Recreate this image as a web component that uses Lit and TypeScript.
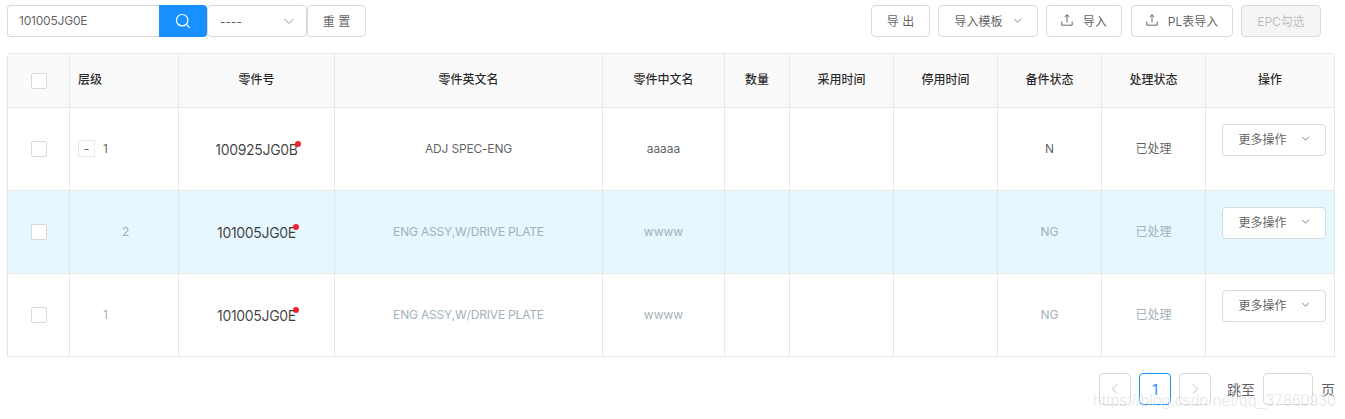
import { LitElement, html, css } from "lit";
import { customElement } from "lit/decorators.js";

const chevron = (cls: string) => html`<svg class=${cls} viewBox="0 0 12 12" fill="none" stroke="currentColor" stroke-width="1.200"><path d="M1.500 3.800 6 8.300l4.500-4.500"/></svg>`;
const upload = html`<svg class="up" viewBox="0 0 12 12" fill="none" stroke="currentColor" stroke-width="1"><path d="M6 .8V8.500M3.700 3 6 .7 8.300 3M.8 7.500v3.700h10.400V7.500"/></svg>`;

const cols = [62, 109, 156, 268, 122, 65, 104, 104, 104, 104, 129];
const rows = [
  { lvl: "1", tree: true, no: "100925JG0B", en: "ADJ SPEC-ENG", cn: "aaaaa", st: "N", dim: false, hl: false },
  { lvl: "2", tree: false, no: "101005JG0E", en: "ENG ASSY,W/DRIVE PLATE", cn: "wwww", st: "NG", dim: true, hl: true },
  { lvl: "1", tree: false, no: "101005JG0E", en: "ENG ASSY,W/DRIVE PLATE", cn: "wwww", st: "NG", dim: true, hl: false },
];

@customElement("app-root")
export class AppRoot extends LitElement {
  static styles = css`
    :host { display: block; width: 1345px; height: 419px; position: relative; overflow: hidden; background: #fff;
      font-family: "Inter", "Noto Sans CJK SC", sans-serif; font-size: 12px; color: rgba(0,0,0,.65); }
    * { box-sizing: border-box; }
    .bar { display: flex; justify-content: space-between; padding: 5px 24px 0 7px; height: 53px; }
    .left, .right { display: flex; height: 32px; }
    .right { gap: 8px; }
    .input { width: 152px; border: 1px solid #d9d9d9; border-right: 0; border-radius: 4px 0 0 4px; padding: 0 11px; line-height: 30px; font-size: 12px; letter-spacing: -.2px; }
    .search { width: 48px; background: #1890ff; border-radius: 0 4px 4px 0; color: #fff; display: flex; align-items: center; justify-content: center; }
    .search svg { width: 16px; height: 16px; }
    .select { width: 100px; border: 1px solid #d9d9d9; border-radius: 4px; display: flex; align-items: center; justify-content: space-between; padding: 0 11px 0 12px; }
    .chev { width: 12px; height: 12px; color: #bfbfbf; }
    .btn { height: 32px; border: 1px solid #d9d9d9; border-radius: 4px; background: #fff; display: flex; align-items: center; justify-content: center; font-size: 12px; white-space: nowrap; padding-bottom: 2px; }
    .b59 { width: 59px; } .b100 { width: 100px; gap: 10px; } .b76 { width: 76px; gap: 10px; margin-right: 1px; } .b102 { width: 102px; gap: 10px; }
    .b80 { width: 80px; background: #f5f5f5; color: rgba(0,0,0,.25); }
    .sm { width: 9px; height: 9px; color: rgba(0,0,0,.55); }
    .up { width: 12px; height: 12px; color: rgba(0,0,0,.6); }
    .wrap { margin-left: 7px; width: 1328px; border: 1px solid #e8e8e8; border-bottom: 0; border-right: 0; border-radius: 4px 4px 0 0; overflow: hidden; }
    .tb { display: grid; grid-template-columns: var(--cols); }
    .c { border-right: 1px solid #e8e8e8; border-bottom: 1px solid #e8e8e8; display: flex; align-items: center; justify-content: center; min-width: 0; position: relative; }
    .h { height: 54px; background: #fafafa; color: rgba(0,0,0,.85); font-weight: 500; padding-bottom: 4px; }
    .boxh { padding-bottom: 0; }
    .r { height: 83px; padding-bottom: 1px; }
    .hl { background: #e6f7ff; }
    .dimt { color: #a3b1b8; }
    .en { letter-spacing: -.18px; }
    .zh { padding-bottom: 3px; }
    .start { justify-content: flex-start; padding-left: 8px; }
    .box { width: 16px; height: 16px; border: 1px solid #d9d9d9; border-radius: 2px; background: #fff; }
    .tree { width: 17px; height: 17px; border: 1px solid #e8e8e8; display: flex; align-items: center; justify-content: center; margin-right: 8px; line-height: 1; }
    .no { font-size: 14px; letter-spacing: -.32px; position: relative; top: 1px; color: rgba(0,0,0,.75); }
    .dot { position: absolute; width: 6px; height: 6px; border-radius: 50%; background: #f5222d; right: -3px; top: 0; }
    .op { align-items: flex-start; justify-content: flex-start; padding: 16px 0 0 16px; }
    .opb { width: 104px; gap: 14px; padding-bottom: 4px; }
    .pg { display: flex; justify-content: flex-end; align-items: center; padding: 16px 10px 0 0; height: 48px; }
    .p { width: 32px; height: 32px; border: 1px solid #d9d9d9; border-radius: 4px; display: flex; align-items: center; justify-content: center; margin-right: 8px; color: #bfbfbf; }
    .p svg { width: 12px; height: 12px; }
    .cur { border-color: #1890ff; color: #1890ff; font-size: 14px; }
    .jump { margin: 0 8px; font-size: 14px; color: rgba(0,0,0,.65); }
    .end { margin-right: 0; }
    .ji { width: 50px; height: 32px; border: 1px solid #d9d9d9; border-radius: 4px; }
    .mark { position: absolute; left: 1093px; top: 391px; font-size: 16px; letter-spacing: -.08px; color: rgba(0,0,0,.1); font-family: "Liberation Sans", sans-serif; white-space: nowrap; text-shadow: 1px 1px 1px rgba(255,255,255,.7); line-height: 20px; }
  `;

  render() {
    const grid = `--cols:${cols.map((c) => c + "px").join(" ")}`;
    const heads = ["", "层级", "零件号", "零件英文名", "零件中文名", "数量", "采用时间", "停用时间", "备件状态", "处理状态", "操作"];
    return html`
      <div class="bar">
        <div class="left">
          <div class="input">101005JG0E</div>
          <div class="search"><svg viewBox="0 0 16 16" fill="none" stroke="currentColor" stroke-width="1.200"><circle cx="7.200" cy="7.200" r="5.700"/><path d="m11.400 11.400 3.400 3.400"/></svg></div>
          <div class="select"><span>----</span>${chevron("chev")}</div>
          <div class="btn b59">重 置</div>
        </div>
        <div class="right">
          <div class="btn b59">导 出</div>
          <div class="btn b100"><span>导入模板</span>${chevron("sm")}</div>
          <div class="btn b76">${upload}<span>导入</span></div>
          <div class="btn b102">${upload}<span>PL表导入</span></div>
          <div class="btn b80">EPC勾选</div>
        </div>
      </div>
      <div class="wrap">
        <div class="tb" style=${grid}>
          ${heads.map((h, i) => html`<div class="c h ${i === 1 ? "start" : ""} ${i === 0 ? "boxh" : ""}">${i === 0 ? html`<span class="box"></span>` : h}</div>`)}
          ${rows.map((r) => {
            const cl = `c r ${r.hl ? "hl" : ""}`;
            const t = r.dim ? "dimt" : "";
            return html`
              <div class=${cl}><span class="box"></span></div>
              <div class="${cl} start" style=${r.tree ? "" : "padding-left:" + (r.hl ? 52 : 33) + "px"}>
                ${r.tree ? html`<span class="tree">-</span>` : ""}<span class=${t}>${r.lvl}</span>
              </div>
              <div class=${cl}><span class="no">${r.no}<i class="dot"></i></span></div>
              <div class="${cl} ${t} en">${r.en}</div>
              <div class="${cl} ${t}">${r.cn}</div>
              <div class=${cl}></div>
              <div class=${cl}></div>
              <div class=${cl}></div>
              <div class="${cl} ${t}">${r.st}</div>
              <div class="${cl} ${t} zh">已处理</div>
              <div class="${cl} op"><div class="btn opb"><span>更多操作</span>${chevron("sm")}</div></div>
            `;
          })}
        </div>
      </div>
      <div class="pg">
        <div class="p"><svg viewBox="0 0 12 12" fill="none" stroke="currentColor"><path d="M8 1.500 3.500 6 8 10.500"/></svg></div>
        <div class="p cur">1</div>
        <div class="p"><svg viewBox="0 0 12 12" fill="none" stroke="currentColor"><path d="M4 1.500 8.500 6 4 10.500"/></svg></div>
        <span class="jump">跳至</span><div class="ji"></div><span class="jump end">页</span>
      </div>
      <div class="mark">https://blog.csdn.net/qq_37860930</div>
    `;
  }
}
